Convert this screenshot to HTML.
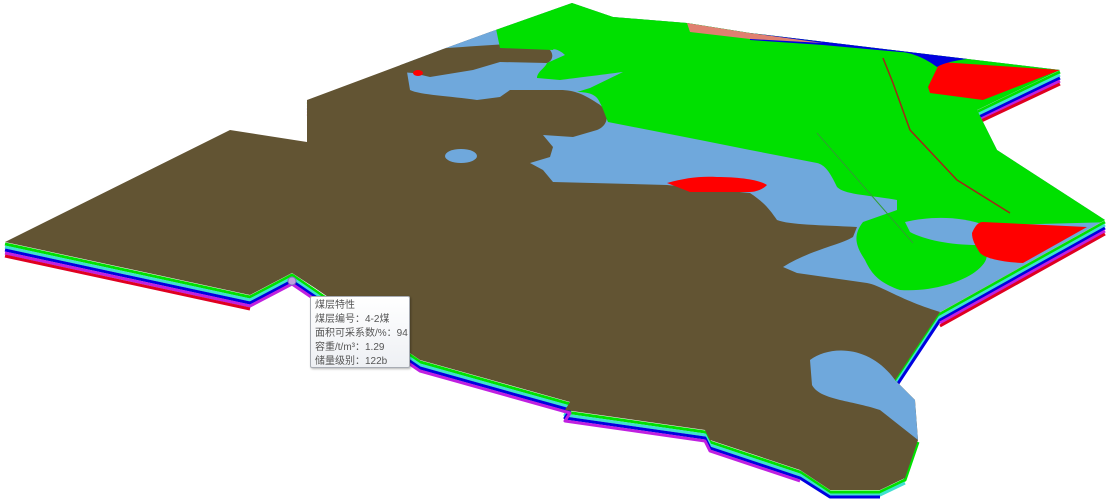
<!DOCTYPE html>
<html><head><meta charset="utf-8"><style>
html,body{margin:0;padding:0;background:#fff;width:1115px;height:500px;overflow:hidden;position:relative}
svg{position:absolute;left:0;top:0}
.tip{position:absolute;left:310px;top:296px;width:100px;height:72px;background:linear-gradient(#fff,#eef0f4);border:1px solid #a8acb4;box-shadow:1px 1px 2px rgba(0,0,0,.3);font-family:"Liberation Sans","Noto Sans CJK SC",sans-serif;font-size:10px;color:#555;line-height:14px;padding:2px 0 0 4px;box-sizing:border-box;border-radius:2px;white-space:nowrap}
</style></head><body>
<svg width="1115" height="500" viewBox="0 0 1115 500">
<defs>
<clipPath id="c"><path d="M5,242 L230,130 L307,142 L307,100 L446,48 L490,32 L572,3 L613,17 L687,23 L750,33 L1060,70 L977,110 L997,150 L1105,220 L940,312 L895,380 L915,400 L918,440 L905,478 L880,490 L830,490 L800,470 L710,440 L705,430 L565,410 L570,402 L420,360 L315,288 L292,273 L250,295 Z"/></clipPath>
</defs>
<g fill="none" stroke-width="3" stroke-linejoin="round">
<path d="M5,244 L250,297 L292,275 L420,362 L570,404 L565,412 L705,432 L710,442 L800,472 L830,492 L880,492 L905,480 L918,442 M1105,222 L940,314 L895,382 M307,102 L350,106 M1060,72 L977,112" stroke="#00e000"/>
<path d="M5,247 L250,300 L292,278 L420,365 L570,407 L565,415 L705,435 L710,445 L800,475 L830,495 L880,495 L905,483 M1105,225 L940,317 L895,385 M307,105 L350,109 M1060,75 L977,115" stroke="#40e0d0"/>
<path d="M5,250 L250,303 L292,281 L420,368 L570,410 L565,418 L705,438 L710,448 L800,478 L830,497 L880,497 M1105,228 L940,320 L895,388 M307,108 L350,112 M1060,78 L977,118" stroke="#0000e0"/>
<path d="M5,253 L250,306 L292,284 L420,371 L570,413 L565,421 L705,441 L710,451 L800,481 M1105,231 L940,323 M307,111 L350,115 M1060,81 L977,121" stroke="#c020e0"/>
<path d="M5,256 L250,309 M1105,234 L940,326 M307,114 L350,118 M1060,84 L977,123" stroke="#e00020"/>
</g>
<g clip-path="url(#c)">
<rect width="1115" height="500" fill="#625433"/>
<!-- blue -->
<path d="M400,0 L1115,0 L1115,330 L940,312 C900,300 880,285 867,283 L797,273 L783,267 C810,250 840,245 853,237 L857,227 C820,225 790,225 777,220 C770,210 765,203 750,193 L667,185 L553,182 L543,170 L530,163 L550,157 L553,147 L543,135 L573,137 L597,130 C610,125 610,110 597,103 C585,95 575,90 560,90 L510,90 L500,97 L477,100 C450,96 420,95 410,90 L405,60 Z" fill="#6fa8dc"/>
<path d="M447,48 C480,46 520,42 540,45 C555,48 555,60 547,63 L500,62 L473,70 L430,77 L413,73 L400,72 L400,55 Z" fill="#625433"/>
<path d="M810,360 C830,345 870,345 895,380 L915,400 L918,440 L880,410 C850,400 820,400 812,385 Z" fill="#6fa8dc"/>
<ellipse cx="461" cy="156" rx="16" ry="7" fill="#6fa8dc"/>
<!-- green -->
<path d="M490,0 L1115,0 L1115,222 L1000,225 C985,232 983,240 983,247 C990,255 987,263 975,272 C960,283 930,292 900,290 C880,283 872,275 865,260 C855,245 853,235 863,222 L897,210 L897,200 C870,195 845,195 837,187 C830,172 825,165 817,163 L750,150 L700,140 L608,122 C605,115 603,108 600,103 C597,95 590,92 577,92 L590,88 L623,72 C600,75 575,78 560,80 L537,78 C537,72 545,68 547,63 L565,55 C560,50 553,48 553,50 L500,48 Z" fill="#00e000"/>
<path d="M905,222 C930,216 960,216 985,225 L978,245 C950,245 925,240 910,232 Z" fill="#6fa8dc"/>
<!-- red / top -->
<path d="M940,62 L1060,70 L983,100 L930,93 L928,87 Z" fill="#ff0000"/>
<path d="M750,33 L973,58 C960,60 945,62 937,67 C925,58 910,52 900,52 L823,45 L750,40 Z" fill="#0000e0"/>
<path d="M687,23 L750,33 L823,43 L750,39 L690,32 Z" fill="#e08070"/>
<path d="M667,183 C685,178 700,176 717,177 C740,177 760,180 767,185 C762,190 755,192 750,192 L690,192 Z" fill="#ff0000"/>
<path d="M972,233 C975,226 978,222 983,222 L1087,227 L1023,263 C1000,262 985,258 980,253 C975,245 972,240 972,233 Z" fill="#ff0000"/>
<ellipse cx="418" cy="73" rx="5" ry="3" fill="#ff0000"/>
<path d="M883,58 L893,83 L910,130 L957,180 L1010,213" stroke="#a02818" stroke-width="1.5" fill="none"/>
<path d="M817,133 L913,243" stroke="#30a030" stroke-width="1" fill="none"/>
</g>
<circle cx="292" cy="281" r="4" fill="#c0a0e0" stroke="#8070c0"/>
</svg>
<div class="tip">煤层特性<br>煤层编号：4-2煤<br>面积可采系数/%：94<br>容重/t/m³：1.29<br>储量级别：122b</div>
</body></html>
